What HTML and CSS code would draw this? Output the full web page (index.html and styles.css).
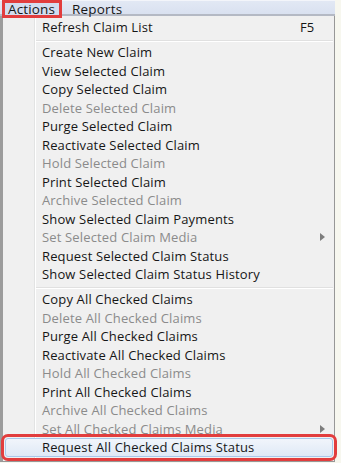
FILE: index.html
```html
<!DOCTYPE html>
<html lang="en">
<head>
  <meta charset="UTF-8" />
  <title>Actions Menu</title>
  <link rel="stylesheet" href="styles.css">
</head>
<body>
  <div class="menubar">
    <span class="menubar-item marked">Actions</span>
    <span class="menubar-item">Reports</span>
  </div>

  <ul class="menu">
    <li class="menu-item">Refresh Claim List<span class="shortcut">F5</span></li>
    <li class="menu-sep"></li>
    <li class="menu-item">Create New Claim</li>
    <li class="menu-item">View Selected Claim</li>
    <li class="menu-item">Copy Selected Claim</li>
    <li class="menu-item disabled">Delete Selected Claim</li>
    <li class="menu-item">Purge Selected Claim</li>
    <li class="menu-item">Reactivate Selected Claim</li>
    <li class="menu-item disabled">Hold Selected Claim</li>
    <li class="menu-item">Print Selected Claim</li>
    <li class="menu-item disabled">Archive Selected Claim</li>
    <li class="menu-item">Show Selected Claim Payments</li>
    <li class="menu-item disabled has-sub">Set Selected Claim Media</li>
    <li class="menu-item">Request Selected Claim Status</li>
    <li class="menu-item">Show Selected Claim Status History</li>
    <li class="menu-sep"></li>
    <li class="menu-item">Copy All Checked Claims</li>
    <li class="menu-item disabled">Delete All Checked Claims</li>
    <li class="menu-item">Purge All Checked Claims</li>
    <li class="menu-item">Reactivate All Checked Claims</li>
    <li class="menu-item disabled">Hold All Checked Claims</li>
    <li class="menu-item">Print All Checked Claims</li>
    <li class="menu-item disabled">Archive All Checked Claims</li>
    <li class="menu-item disabled has-sub">Set All Checked Claims Media</li>
    <li class="menu-item active marked-row">Request All Checked Claims Status</li>
  </ul>
</body>
</html>
```

FILE: styles.css
```css
* { box-sizing: border-box; }

body {
  margin: 0;
  background: #f7f7ef;
  font-family: 'Open Sans', 'Segoe UI', sans-serif;
  font-size: 13px;
  letter-spacing: 0.15px;
  color: #161616;
}

/* Menu bar */
.menubar {
  width: 335px;
  height: 16px;
  display: flex;
  align-items: flex-start;
  gap: 9px;
  padding-left: 5px;
  background: linear-gradient(#f3f5fa 0, #f3f5fa 1px, #e2e8f4 1px, #d9e1f0 100%);
  border-bottom: 2px solid #b4b9c4;
}

.menubar-item {
  display: inline-block;
  position: relative;
  top: 3px;
  padding: 0 4px;
  font-size: 13.5px;
  line-height: 12px;
}

.menubar-item.marked {
  padding: 0 4px 0 3px;
  background: #d3ddef;
  outline: 3px solid #e23d3d;
  outline-offset: 0;
}

/* Dropdown */
.menu {
  list-style: none;
  margin: 0;
  padding: 2px 1px 4px 0;
  width: 335px;
  border-left: 3px solid #9c9c9c;
  border-right: 1px solid #979797;
  border-bottom: 1px solid #979797;
  background: linear-gradient(90deg, #f0f0f0 31px, #e2e3e3 31px, #e2e3e3 32px, #fff 32px, #fff 33px, #f0f0f0 33px);
}

.menu-item {
  position: relative;
  height: 18.5px;
  line-height: 18px;
  padding-left: 39px;
  white-space: nowrap;
}

.menu-item.disabled { color: #8b8b8b; }

.shortcut {
  position: absolute;
  left: 297px;
}

.has-sub::after {
  content: '';
  position: absolute;
  right: 8px;
  top: 5px;
  border-left: 5px solid #7d7d7d;
  border-top: 4px solid transparent;
  border-bottom: 4px solid transparent;
}

.menu-sep {
  height: 6.5px;
  margin-left: 33px;
  background: linear-gradient(transparent 3px, #e0e0e0 3px, #e0e0e0 4px, #fff 4px, #fff 5px, transparent 5px);
}

.menu-item.active {
  margin: 0 0 0 2px;
  padding-left: 36px;
  line-height: 16px;
  border: 1px solid #a9c7ea;
  border-radius: 3px;
  background: linear-gradient(#f1f5fb, #dfe9f6);
}

.marked-row {
  outline: 3px solid #e23d3d;
  outline-offset: 1px;
}
```
